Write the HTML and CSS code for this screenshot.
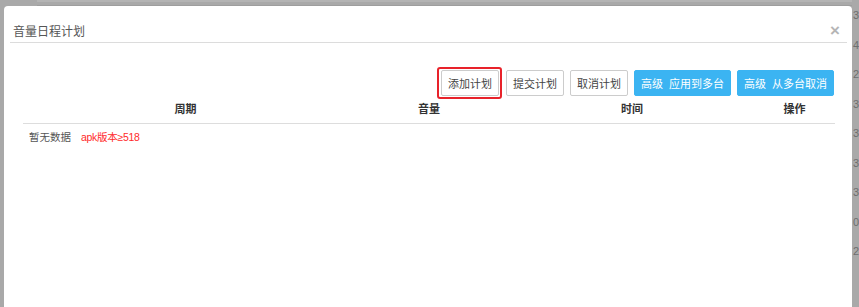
FILE: index.html
```html
<!DOCTYPE html>
<html lang="zh-CN">

<head>
    <meta charset="UTF-8">
    <meta name="viewport" content="width=device-width, initial-scale=1.0">
    <title>音量日程计划</title>
    <link rel="stylesheet" href="styles.css">
</head>

<body>
    <div class="screen">
        <div class="stage">
            <div class="bg-line"></div>
            <div class="modal">
                <div class="modal-hd">
                    <span class="modal-title">音量日程计划</span>
                    <span class="modal-close">&times;</span>
                </div>
                <div class="modal-bd">
                    <div class="toolbar">
                        <span class="mark-box">
                            <button class="btn">添加计划</button>
                        </span>
                        <button class="btn">提交计划</button>
                        <button class="btn">取消计划</button>
                        <button class="btn btn-blue">高级<span class="sp"></span>应用到多台</button>
                        <button class="btn btn-blue">高级<span class="sp"></span>从多台取消</button>
                    </div>
                    <table class="plan-table">
                        <colgroup>
                            <col class="c-cycle">
                            <col class="c-volume">
                            <col class="c-time">
                            <col class="c-op">
                        </colgroup>
                        <thead>
                            <tr>
                                <th>周期</th>
                                <th>音量</th>
                                <th>时间</th>
                                <th>操作</th>
                            </tr>
                        </thead>
                        <tbody>
                            <tr>
                                <td colspan="4" class="empty">暂无数据<span class="tip">apk版本≥518</span></td>
                            </tr>
                        </tbody>
                    </table>
                </div>
            </div>
        </div>
        <!-- page behind the modal, only a sliver shows -->
        <div class="bg-col">
            <span>36</span>
            <span>44</span>
            <span>20</span>
            <span>34</span>
            <span>34</span>
            <span>37</span>
            <span>34</span>
            <span>04</span>
            <span>24</span>
        </div>
    </div>
</body>

</html>
```

FILE: styles.css
```css
body {
    margin: 0;
    background-color: #a9a9a9;
    font-family: "Liberation Sans", "Noto Sans CJK SC", sans-serif;
    overflow: hidden;
}

.screen {
    display: flex;
    height: 307px;
    overflow: hidden;
}

.stage {
    display: flex;
    flex-direction: column;
    padding-left: 4px;
    width: 848px;
    flex-shrink: 0;
}

.bg-line {
    height: 6px;
    margin-left: 33px;
    box-sizing: border-box;
    border-top: 2px solid #b4b4b4;
    border-bottom: 1px solid #9e9e9e;
}

.modal {
    background-color: #fff;
    border-radius: 4px 4px 0 0;
    height: 320px;
}

.modal-hd {
    display: flex;
    justify-content: space-between;
    align-items: center;
    margin: 0 5px 0 6px;
    padding: 16px 3px 0 3px;
    height: 20px;
    border-bottom: 1px solid #dcdcdc;
}

.modal-title {
    font-size: 12px;
    color: #555;
    line-height: 20px;
}

.modal-close {
    font-size: 17px;
    font-weight: bold;
    color: #b5b5b5;
    line-height: 20px;
    margin-right: 4px;
    margin-bottom: 2px;
}

.modal-bd {
    padding: 0 17px 0 19px;
}

.toolbar {
    display: flex;
    justify-content: flex-end;
    align-items: center;
    gap: 6px;
    margin-top: 24px;
    margin-right: 1px;
}

.mark-box {
    display: flex;
    border: 2px solid #e8222a;
    border-radius: 3px;
    padding: 1px 1px 1px 2px;
    margin-right: -2px;
}

.btn {
    height: 26px;
    padding: 0 6px;
    border: 1px solid #ccc;
    border-radius: 2px;
    background-color: #fff;
    color: #444;
    font-family: "Liberation Sans", "Noto Sans CJK SC", sans-serif;
    font-size: 11px;
    cursor: pointer;
}

.btn-blue {
    background-color: #3bb4f2;
    border-color: #3bb4f2;
    color: #fff;
    padding: 0 6px;
}

.sp {
    display: inline-block;
    width: 6px;
}

.plan-table {
    width: 100%;
    border-collapse: collapse;
    font-size: 11px;
}

.c-cycle {
    width: 40%;
}

.c-volume {
    width: 20%;
}

.c-time {
    width: 30%;
}

.c-op {
    width: 10%;
}

.plan-table th {
    padding: 2px 0 5px;
    line-height: 17px;
    color: #333;
    font-weight: bold;
    text-align: center;
    border-bottom: 1px solid #ddd;
}

.plan-table td {
    padding: 5px 6px;
    line-height: 17px;
    font-size: 10.5px;
    color: #555;
}

.tip {
    color: #ff2a2a;
    margin-left: 10px;
    letter-spacing: -0.3px;
}

.bg-col {
    display: flex;
    flex-direction: column;
    padding: 7px 0 0 1px;
    gap: 12px;
    font-size: 11px;
    line-height: 17.5px;
    color: #6e6e6e;
    white-space: nowrap;
}
```
